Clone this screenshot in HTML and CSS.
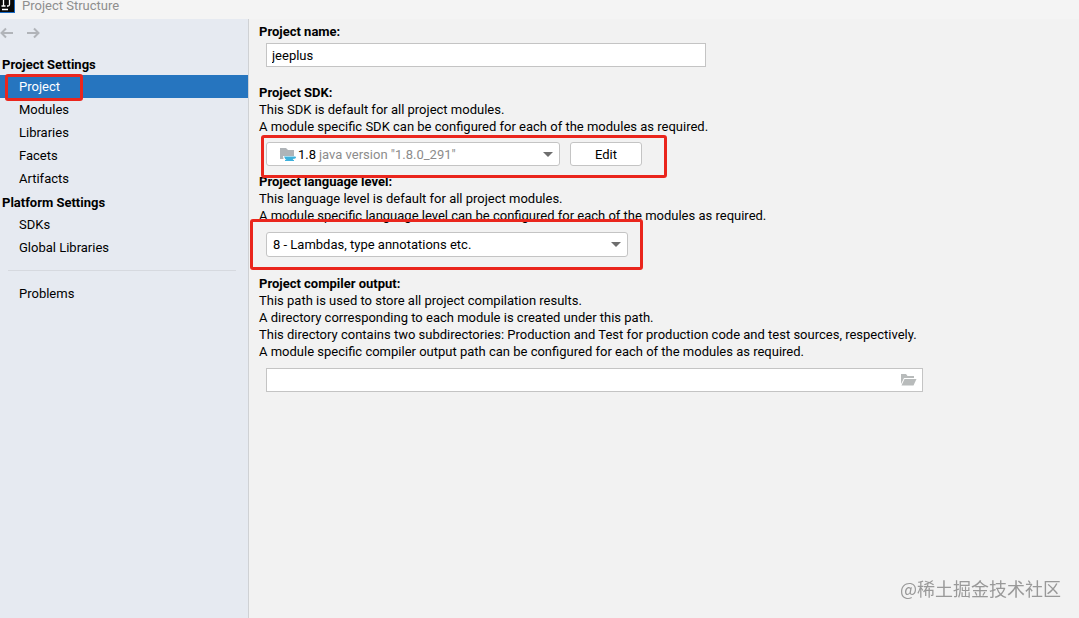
FILE: index.html
```html
<!DOCTYPE html>
<html lang="en">
<head>
    <meta charset="UTF-8">
    <meta name="viewport" content="width=device-width, initial-scale=1.0">
    <title>Project Structure</title>
    <link rel="stylesheet" href="styles.css">
</head>
<body>
    <header class="titlebar">
        <svg class="logo" width="15" height="13" viewBox="0 5 15 13" aria-hidden="true">
            <rect width="15" height="18" fill="#1769c4"/>
            <rect width="14" height="17" fill="#080808"/>
            <path d="M3.500 4v7M1.500 11h4M9.500 4v5.500q0 1.500-1.500 1.500H7M2 14.500h6" fill="none" stroke="#fff" stroke-width="1.300"/>
        </svg>
        <span>Project Structure</span>
    </header>

    <div class="window">
        <aside class="sidebar">
            <div class="history">
                <button type="button" aria-label="Back">
                    <svg width="14" height="12" viewBox="0 0 14 12"><path d="M13 6H1.500M6 1.500 1.500 6 6 10.500"/></svg>
                </button>
                <button type="button" aria-label="Forward">
                    <svg width="14" height="12" viewBox="0 0 14 12"><path d="M1 6h11.500M8 1.500 12.500 6 8 10.500"/></svg>
                </button>
            </div>
            <nav>
                <h2>Project Settings</h2>
                <a href="#project" class="active">Project<span class="mark mark-nav"></span></a>
                <a href="#modules">Modules</a>
                <a href="#libraries">Libraries</a>
                <a href="#facets">Facets</a>
                <a href="#artifacts">Artifacts</a>
                <h2>Platform Settings</h2>
                <a href="#sdks">SDKs</a>
                <a href="#global">Global Libraries</a>
                <hr>
                <a href="#problems">Problems</a>
            </nav>
        </aside>

        <main class="content">
            <section class="name-group">
                <label class="heading" for="name">Project name:</label>
                <input type="text" id="name" class="field name" value="jeeplus">
            </section>

            <section class="sdk-group">
                <label class="heading" for="sdk">Project SDK:</label>
                <p>This SDK is default for all project modules.</p>
                <p>A module specific SDK can be configured for each of the modules as required.</p>
                <div class="row">
                    <div class="combo sdk">
                        <select id="sdk">
                            <option>1.8</option>
                        </select>
                        <span class="combo-value">
                            <svg width="16" height="14" viewBox="0 0 16 14" aria-hidden="true">
                                <path d="M0 1h6l2 2h6v9H0z" fill="#afb4b8"/>
                                <path d="M3 9h13v3h-2l-1 2H5q-2-2-2-5z" fill="#fff"/>
                                <path d="M4 9.500h11q1 0 1 1t-1.500 1.300h-1q-.5 1.700-2 1.700H7q-2-1-3-4zM5 13h9v1H5z" fill="#3eb1dc"/>
                            </svg>
                            <span>java version "1.8.0_291"</span>
                        </span>
                        <span class="arrow"></span>
                    </div>
                    <button type="button" class="edit">Edit</button>
                    <span class="mark mark-sdk"></span>
                </div>
            </section>

            <section class="level-group">
                <label class="heading" for="level">Project language level:</label>
                <p>This language level is default for all project modules.</p>
                <p>A module specific language level can be configured for each of the modules as required.</p>
                <div class="row">
                    <div class="combo level">
                        <select id="level">
                            <option>8 - Lambdas, type annotations etc.</option>
                        </select>
                        <span class="arrow"></span>
                    </div>
                    <span class="mark mark-level"></span>
                </div>
            </section>

            <section>
                <label class="heading" for="output">Project compiler output:</label>
                <p>This path is used to store all project compilation results.</p>
                <p>A directory corresponding to each module is created under this path.</p>
                <p>This directory contains two subdirectories: Production and Test for production code and test sources, respectively.</p>
                <p>A module specific compiler output path can be configured for each of the modules as required.</p>
                <div class="row field output">
                    <input type="text" id="output">
                    <button type="button" aria-label="Browse">
                        <svg width="16" height="12" viewBox="0 0 16 12"><path d="M0 0h5l1.500 2H13v2H3L0 10z"/><path d="M3.500 5H15.500L12.500 11.500H.5z"/></svg>
                    </button>
                </div>
            </section>
        </main>
    </div>

    <div class="watermark">@稀土掘金技术社区</div>
</body>
</html>
```

FILE: styles.css
```css
* {
    box-sizing: border-box;
}
body {
    margin: 0;
    min-height: 100vh;
    display: flex;
    flex-direction: column;
    background-color: #f2f2f2;
    color: #000;
    font: 13px/17px Roboto, "Noto Sans CJK SC", sans-serif;
}
input, select, button {
    font: inherit;
    color: inherit;
}
button {
    padding: 0;
    border: 0;
    background: none;
}
p {
    margin: 0;
}

/* title bar */
.titlebar {
    height: 19px;
    display: flex;
    align-items: flex-start;
    gap: 7px;
    background-color: #f4f4f4;
    color: #8e8e8e;
    line-height: 12px;
}

.window {
    flex: 1;
    display: flex;
}

/* sidebar */
.sidebar {
    width: 249px;
    flex-shrink: 0;
    background-color: #e6eaf1;
    border-right: 1px solid #cfd1d4;
}
.history {
    height: 33px;
    display: flex;
    align-items: flex-start;
    gap: 12px;
    padding-top: 8px;
}
.history button {
    display: flex;
}
.history svg {
    fill: none;
    stroke: #b1b4b9;
    stroke-width: 2;
}
nav h2 {
    margin: 0;
    padding: 2px 0 0 2px;
    font-size: 13px;
    line-height: 21px;
}
nav a {
    position: relative;
    display: block;
    padding-left: 19px;
    line-height: 23px;
    color: #000;
    text-decoration: none;
}
nav a.active {
    background-color: #2675bf;
    color: #fff;
}
nav hr {
    margin: 11px 12px 11px 8px;
    border: 0;
    border-top: 1px solid #d6d9df;
}

/* settings form */
.content {
    flex: 1;
    min-width: 0;
    padding: 4px 10px;
}
.heading {
    display: block;
    font-weight: bold;
}
.name-group {
    margin-bottom: 17px;
}
.sdk-group {
    margin-bottom: 7px;
}
.level-group {
    margin-bottom: 18px;
}
.row {
    position: relative;
    display: flex;
    gap: 10px;
    margin: 7px 0 0 7px;
}
.field {
    height: 24px;
    border: 1px solid #c4c4c4;
    background-color: #fff;
}
.name {
    display: block;
    width: 440px;
    max-width: 100%;
    margin: 3px 0 0 7px;
    padding: 0 5px;
}
.combo {
    display: grid;
    align-items: center;
}
.combo > * {
    grid-area: 1 / 1;
}
.combo select {
    width: 100%;
    height: 24px;
    padding: 0 24px 0 6px;
    border: 1px solid #c4c4c4;
    border-radius: 3px;
    background-color: #fff;
    appearance: none;
}
.sdk {
    width: 294px;
}
.sdk select {
    padding-left: 31px;
}
.combo-value {
    display: flex;
    align-items: center;
    gap: 23px;
    padding-left: 14px;
    color: #8c8c8c;
    pointer-events: none;
}
.level {
    width: 362px;
}
.level-group .row {
    margin-top: 8px;
}
.level select {
    height: 25px;
}
.arrow {
    justify-self: end;
    margin-right: 7px;
    border: 5px solid transparent;
    border-top-color: #6e6e6e;
    border-bottom: 0;
    pointer-events: none;
}
.edit {
    width: 72px;
    height: 24px;
    border: 1px solid #c4c4c4;
    border-radius: 3px;
    background-color: #fff;
}
.output {
    width: 657px;
    max-width: 100%;
    margin-top: 8px;
}
.output input {
    flex: 1;
    min-width: 0;
    padding: 0 5px;
    border: 0;
    background: none;
    outline: 0;
}
.output button {
    display: flex;
    align-items: center;
    padding-right: 5px;
}
.output svg {
    fill: #b8bbbb;
}

/* red marker frames drawn over the form */
.mark {
    position: absolute;
    border: 3px solid #ea261d;
    border-radius: 3px;
    pointer-events: none;
    z-index: 1;
}
.mark-nav {
    top: -1px;
    left: 5px;
    width: 78px;
    height: 27px;
}
.mark-sdk {
    top: -7px;
    left: -5px;
    width: 406px;
    height: 43px;
}
.mark-level {
    top: -13px;
    left: -16px;
    width: 393px;
    height: 51px;
}

.watermark {
    position: fixed;
    right: 18px;
    bottom: 18px;
    color: #999;
    font: 18px/24px "Noto Sans CJK SC", sans-serif;
}
```
